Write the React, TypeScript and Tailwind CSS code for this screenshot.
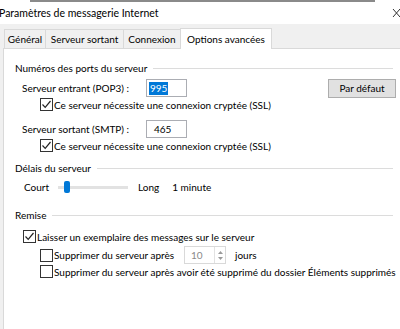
import React from "react";

function Check({ checked }: { checked?: boolean }) {
  return (
    <span className="inline-flex w-[13px] h-[13px] border border-[#333333] bg-white items-center justify-center shrink-0">
      {checked && (
        <svg width="11" height="11" viewBox="0 0 11 11">
          <path d="M1.5 5.5 L4.2 8.3 L9.5 2" fill="none" stroke="#222" strokeWidth="1.2" />
        </svg>
      )}
    </span>
  );
}

function GroupTitle({ text }: { text: string }) {
  return (
    <div className="flex items-center h-[14px] pl-[11px] pr-[7px]">
      <span className="whitespace-nowrap">{text}</span>
      <div className="flex-1 h-px bg-[#dcdcdc] ml-[6px]" />
    </div>
  );
}

export default function App() {
  return (
    <div
      className="w-[400px] h-[329px] bg-[#f0f0f0] flex flex-col overflow-hidden text-[10px] text-black leading-none whitespace-nowrap"
      style={{ fontFamily: 'Lato, "Noto Sans", sans-serif' }}
    >
      <div className="h-[2px] bg-white flex">
        <div className="h-[2px] bg-[#8a8a8a] ml-[30px] w-[345px]" />
      </div>
      <div className="h-[22px] bg-white flex items-center justify-between text-[10.5px]">
        <span className="-ml-[1px]">Paramètres de messagerie Internet</span>
        <svg width="8" height="10" viewBox="0 0 8 10" className="mr-0">
          <path d="M1 1 L8 9 M8 1 L1 9" stroke="#333" strokeWidth="1" fill="none" />
        </svg>
      </div>
      <div className="flex items-end pl-[4px] pt-[4px] h-[24px]">
        <div className="h-[19px] w-[42px] flex items-center justify-center border border-b-0 border-[#d9d9d9] bg-[#f0f0f0]">Général</div>
        <div className="h-[19px] w-[78px] flex items-center justify-center border border-b-0 border-l-0 border-[#d9d9d9] bg-[#f0f0f0]">Serveur sortant</div>
        <div className="h-[19px] w-[57px] flex items-center justify-center border border-b-0 border-l-0 border-[#d9d9d9] bg-[#f0f0f0]">Connexion</div>
        <div className="h-[21px] w-[92px] flex items-center justify-center border border-b-0 border-[#d9d9d9] bg-white -mb-px -ml-px relative z-10">Options avancées</div>
      </div>
      <div className="flex-1 ml-[3px] bg-white border-l border-t border-[#d9d9d9] pt-[12px]">
        <GroupTitle text="Numéros des ports du serveur" />
        <div className="flex items-center h-[18px] mt-[4px] pl-[18px]">
          <span className="w-[124px]">Serveur entrant (POP3) :</span>
          <div className="w-[41px] h-[18px] border border-[#abadb3] flex items-center pl-[2px]">
            <span className="bg-[#0078d7] text-white px-[1px] h-[13px] flex items-center">995</span>
          </div>
          <div className="flex-1" />
          <div className="w-[68px] h-[19px] mr-[4px] bg-[#e1e1e1] border border-[#adadad] flex items-center justify-center">Par défaut</div>
        </div>
        <div className="flex items-center h-[13px] mt-[1px] pl-[36px] gap-[1px]">
          <Check checked />
          <span>Ce serveur nécessite une connexion cryptée (SSL)</span>
        </div>
        <div className="flex items-center h-[18px] mt-[9px] pl-[18px]">
          <span className="w-[124px]">Serveur sortant (SMTP) :</span>
          <div className="w-[41px] h-[18px] border border-[#abadb3] flex items-center pl-[7px]">465</div>
        </div>
        <div className="flex items-center h-[13px] mt-[1px] pl-[36px] gap-[1px]">
          <Check checked />
          <span>Ce serveur nécessite une connexion cryptée (SSL)</span>
        </div>
        <div className="mt-[9px]">
          <GroupTitle text="Délais du serveur" />
        </div>
        <div className="flex items-center h-[14px] mt-[5px] pl-[20px]">
          <span className="w-[34px]">Court</span>
          <div className="relative w-[70px] h-[14px] flex items-center">
            <div className="w-full h-[3px] bg-[#e2e2e2]" />
            <div className="absolute left-[6px] top-[1px] w-[6px] h-[12px] rounded-[2px] bg-[#0078d7]" />
          </div>
          <span className="ml-[10px]">Long</span>
          <span className="ml-[13px]">1 minute</span>
        </div>
        <div className="mt-[14px]">
          <GroupTitle text="Remise" />
        </div>
        <div className="flex items-center h-[13px] mt-[8px] pl-[19px] gap-[1px]">
          <Check checked />
          <span>Laisser un exemplaire des messages sur le serveur</span>
        </div>
        <div className="flex items-center h-[18px] mt-[3px] pl-[36px] gap-[1px]">
          <Check />
          <span className="w-[129px]">Supprimer du serveur après</span>
          <div className="w-[42px] h-[18px] border border-[#d9d9d9] flex items-center justify-between pl-[6px] text-[#8a8a8a]">
            <span>10</span>
            <div className="w-[11px] h-full border-l border-[#e2e2e2] flex flex-col items-center justify-center gap-[3px]">
              <svg width="5" height="3" viewBox="0 0 5 3"><path d="M0 3 L2.5 0 L5 3 Z" fill="#9a9a9a" /></svg>
              <svg width="5" height="3" viewBox="0 0 5 3"><path d="M0 0 L2.5 3 L5 0 Z" fill="#9a9a9a" /></svg>
            </div>
          </div>
          <span className="ml-[8px]">jours</span>
        </div>
        <div className="flex items-center h-[13px] mt-[1px] pl-[36px] gap-[1px]">
          <Check />
          <span>Supprimer du serveur après avoir été supprimé du dossier Éléments supprimés</span>
        </div>
      </div>
    </div>
  );
}
